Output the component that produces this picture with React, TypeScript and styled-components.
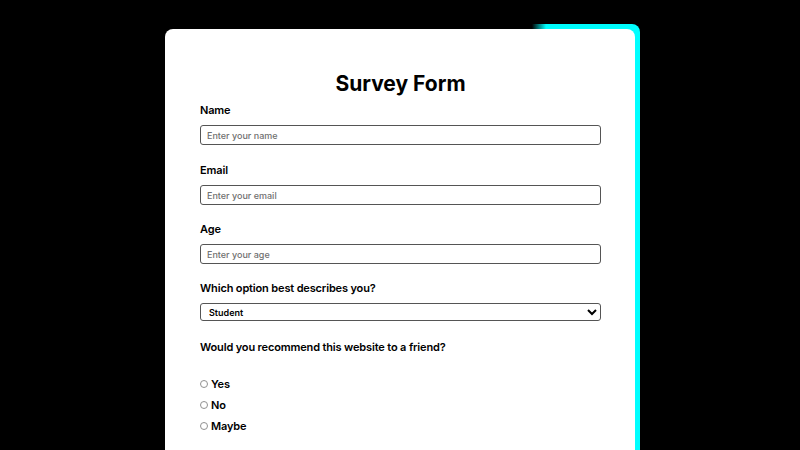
import React from "react";
import styled, { createGlobalStyle } from "styled-components";

const Global = createGlobalStyle`
  html, body { margin: 0; padding: 0; background: #000; }
  body { font-family: "Inter", "Noto Sans", sans-serif; }
  * { box-sizing: border-box; }
`;

const Page = styled.div`
  isolation: isolate;
  min-height: 450px;
  display: flex;
  justify-content: center;
  padding-top: 29px;
`;

const Card = styled.form`
  position: relative;
  width: 470px;
  background: #fff;
  border-radius: 8px;
  padding: 41px 34px 30px 35px;
  display: flex;
  flex-direction: column;
  &::before {
    content: "";
    position: absolute;
    top: -5px;
    right: -5px;
    width: 100%;
    height: 100%;
    border-radius: 8px;
    z-index: -1;
    background: linear-gradient(to right, rgba(0,255,255,0) 77%, #00ffff 80%);
  }
`;

const Title = styled.h1`
  margin: 0 0 4px;
  text-align: center;
  font-size: 21px;
  line-height: 28px;
  font-weight: 700;
  color: #000;
`;

const Group = styled.div<{ $gap?: number }>`
  display: flex;
  flex-direction: column;
  margin-bottom: ${(p) => p.$gap ?? 16}px;
`;

const Label = styled.label<{ $space?: number }>`
  font-size: 11px;
  letter-spacing: -0.15px;
  line-height: 16px;
  font-weight: 600;
  color: #000;
  margin-bottom: ${(p) => p.$space ?? 7}px;
`;

const Input = styled.input`
  height: 20px;
  width: 100%;
  border: 1px solid #555;
  border-radius: 3px;
  padding: 0 6px;
  font-family: inherit;
  font-size: 9px;
  font-weight: 500;
  &::placeholder { color: #707070; }
`;

const Select = styled.select`
  height: 18px;
  width: 100%;
  border: 1px solid #555;
  border-radius: 3px;
  padding: 0 4px;
  font-family: inherit;
  font-size: 9px;
  font-weight: 600;
  color: #000;
  background: #fff;
`;

const RadioList = styled.div`
  display: flex;
  flex-direction: column;
  gap: 5px;
  margin-top: 21px;
`;

const RadioRow = styled.label`
  display: flex;
  align-items: center;
  font-size: 11px;
  letter-spacing: -0.15px;
  line-height: 16px;
  font-weight: 600;
  color: #000;
`;

const Radio = styled.input`
  width: 8px;
  height: 8px;
  margin: 0 3px 0 0;
  opacity: 0.8;
`;

export default function App() {
  return (
    <>
      <Global />
      <Page>
        <Card onSubmit={(e) => e.preventDefault()}>
          <Title>Survey Form</Title>
          <Group $gap={17}>
            <Label htmlFor="name">Name</Label>
            <Input id="name" type="text" placeholder="Enter your name" />
          </Group>
          <Group>
            <Label htmlFor="email">Email</Label>
            <Input id="email" type="email" placeholder="Enter your email" />
          </Group>
          <Group>
            <Label htmlFor="age">Age</Label>
            <Input id="age" type="number" placeholder="Enter your age" />
          </Group>
          <Group $gap={18}>
            <Label htmlFor="role">Which option best describes you?</Label>
            <Select id="role" defaultValue="student">
              <option value="student">Student</option>
              <option value="fulltime">Full Time Job</option>
              <option value="learner">Full Time Learner</option>
              <option value="other">Other</option>
            </Select>
          </Group>
          <Group $gap={0}>
            <Label $space={0}>Would you recommend this website to a friend?</Label>
            <RadioList>
              <RadioRow><Radio type="radio" name="rec" value="yes" />Yes</RadioRow>
              <RadioRow><Radio type="radio" name="rec" value="no" />No</RadioRow>
              <RadioRow><Radio type="radio" name="rec" value="maybe" />Maybe</RadioRow>
            </RadioList>
          </Group>
        </Card>
      </Page>
    </>
  );
}
